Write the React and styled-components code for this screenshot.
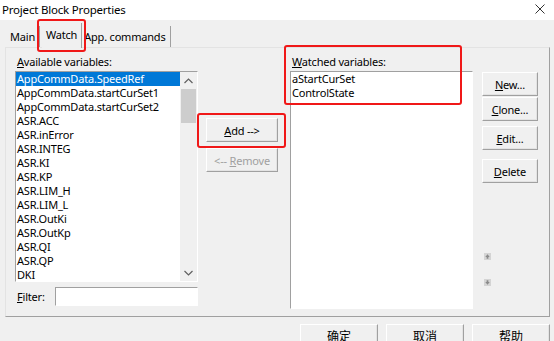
import React from "react";
import styled, { createGlobalStyle } from "styled-components";

const GlobalStyle = createGlobalStyle`
  html, body {
    margin: 0;
    padding: 0;
    background: #f0f0f0;
  }
  body {
    font-family: "Noto Sans", "Noto Sans CJK SC", sans-serif;
    font-size: 11px;
    letter-spacing: -0.2px;
    color: #000;
  }
`;

const available = [
  "AppCommData.SpeedRef",
  "AppCommData.startCurSet1",
  "AppCommData.startCurSet2",
  "ASR.ACC",
  "ASR.inError",
  "ASR.INTEG",
  "ASR.KI",
  "ASR.KP",
  "ASR.LIM_H",
  "ASR.LIM_L",
  "ASR.OutKi",
  "ASR.OutKp",
  "ASR.QI",
  "ASR.QP",
  "DKI",
];

const watched = ["aStartCurSet", "ControlState"];

export default function App() {
  return (
    <Window>
      <GlobalStyle />
      <TitleBar>
        <span>Project Block Properties</span>
        <CloseIcon viewBox="0 0 10 10">
          <path d="M0.5 0.5 L9.5 9.5 M9.5 0.5 L0.5 9.5" stroke="#333" strokeWidth="1" />
        </CloseIcon>
      </TitleBar>

      <Body>
        <Tabs>
          <Tab>Main</Tab>
          <Tab $active>Watch</Tab>
          <Tab>App. commands</Tab>
        </Tabs>

        <Panel>
          <LeftCol>
            <Label>
              <u>A</u>vailable variables:
            </Label>
            <ListBox $height={211}>
              <Items>
                {available.map((name, i) => (
                  <Item key={name} $selected={i === 0}>
                    {name}
                  </Item>
                ))}
              </Items>
              <ScrollBar>
                <ScrollArrow viewBox="0 0 9 6">
                  <path d="M0.5 5 L4.5 1 L8.5 5" fill="none" stroke="#606060" strokeWidth="1.2" />
                </ScrollArrow>
                <Track>
                  <Thumb />
                </Track>
                <ScrollArrow viewBox="0 0 9 6">
                  <path d="M0.5 1 L4.5 5 L8.5 1" fill="none" stroke="#606060" strokeWidth="1.2" />
                </ScrollArrow>
              </ScrollBar>
            </ListBox>
            <FilterRow>
              <span>
                <u>F</u>ilter:
              </span>
              <FilterInput />
            </FilterRow>
          </LeftCol>

          <MiddleCol>
            <Button $w={72}>
              <u>A</u>dd --&gt;
            </Button>
            <Button $w={72} disabled>
              &lt;-- <u>R</u>emove
            </Button>
          </MiddleCol>

          <RightCol>
            <Label>
              <u>W</u>atched variables:
            </Label>
            <ListBox $height={238}>
              <Items>
                {watched.map((name) => (
                  <Item key={name}>{name}</Item>
                ))}
              </Items>
            </ListBox>
          </RightCol>

          <ActionCol>
            <Button $w={56}>
              <u>N</u>ew...
            </Button>
            <Button $w={56}>
              <u>C</u>lone...
            </Button>
            <Button $w={56} $mt={4}>
              <u>E</u>dit...
            </Button>
            <Button $w={56} $mt={8}>
              <u>D</u>elete
            </Button>
            <Spacer />
            <MoveIcon viewBox="0 0 8 8">
              <rect width="8" height="8" fill="#d4d4d4" />
              <path d="M4 1.5 L6.5 4.5 L5 4.5 L5 6.5 L3 6.5 L3 4.5 L1.5 4.5 Z" fill="#8a8a8a" />
            </MoveIcon>
            <MoveIcon viewBox="0 0 8 8">
              <rect width="8" height="8" fill="#d4d4d4" />
              <path d="M4 6.5 L6.5 3.5 L5 3.5 L5 1.5 L3 1.5 L3 3.5 L1.5 3.5 Z" fill="#8a8a8a" />
            </MoveIcon>
          </ActionCol>

          <Mark $x={31} $y={-29} $w={49} $h={33} />
          <Mark $x={191} $y={65} $w={89} $h={35} />
          <Mark $x={278} $y={-3} $w={178} $h={60} />
        </Panel>

        <Footer>
          <FooterButton>确定</FooterButton>
          <FooterButton>取消</FooterButton>
          <FooterButton>帮助</FooterButton>
        </Footer>
      </Body>
    </Window>
  );
}

const Window = styled.div`
  width: 554px;
  height: 341px;
  overflow: hidden;
  background: #f0f0f0;
`;

const TitleBar = styled.div`
  height: 20px;
  background: #fff;
  display: flex;
  align-items: center;
  justify-content: space-between;
  padding: 0 9px 2px 2px;
  box-sizing: border-box;
  font-size: 11.5px;
`;

const CloseIcon = styled.svg`
  width: 10px;
  height: 10px;
`;

const Body = styled.div`
  padding: 3px 4px 0 5px;
`;

const Tabs = styled.div`
  display: flex;
  align-items: flex-end;
  height: 24px;
  padding-left: 3px;
`;

const Tab = styled.div`
  height: 21px;
  box-sizing: border-box;
  display: flex;
  align-items: center;
  padding: 0 4px 0 2px;
  border-right: 1px solid #a0a0a0;
  background: #f0f0f0;
  position: relative;
  z-index: 1;
  ${(p) =>
    p.$active &&
    `
    height: 25px;
    margin: 0 0 -1px 2px;
    padding: 0 4px 2px 4px;
    z-index: 2;
  `}
`;

const Panel = styled.div`
  position: relative;
  width: 545px;
  height: 270px;
  box-sizing: border-box;
  border: 1px solid;
  border-color: #e3e3e3 #a0a0a0 #a0a0a0 #e3e3e3;
  display: flex;
  align-items: flex-start;
  padding: 7px 0 0 9px;
`;

const LeftCol = styled.div`
  width: 183px;
  display: flex;
  flex-direction: column;
`;

const Label = styled.div`
  height: 16px;
  line-height: 14px;
  padding-left: 2px;
`;

const ListBox = styled.div`
  height: ${(p) => p.$height}px;
  box-sizing: border-box;
  background: #fff;
  border: 1px solid;
  border-color: #a0a0a0 #fff #fff #a0a0a0;
  display: flex;
`;

const Items = styled.div`
  flex: 1;
  overflow: hidden;
`;

const Item = styled.div`
  height: 14px;
  line-height: 14px;
  padding-left: 1px;
  white-space: nowrap;
  background: ${(p) => (p.$selected ? "#0078d7" : "transparent")};
  color: ${(p) => (p.$selected ? "#fff" : "#000")};
`;

const ScrollBar = styled.div`
  width: 17px;
  display: flex;
  flex-direction: column;
  background: #f0f0f0;
`;

const ScrollArrow = styled.svg`
  width: 9px;
  height: 6px;
  margin: 6px auto 5px;
`;

const Track = styled.div`
  flex: 1;
  padding: 0 1px;
`;

const Thumb = styled.div`
  height: 34px;
  background: #cdcdcd;
`;

const FilterRow = styled.div`
  display: flex;
  align-items: center;
  margin-top: 5px;
  padding-left: 2px;
  gap: 10px;
`;

const FilterInput = styled.div`
  flex: 1;
  height: 19px;
  box-sizing: border-box;
  background: #fff;
  border: 1px solid;
  border-color: #a0a0a0 #fff #fff #a0a0a0;
`;

const MiddleCol = styled.div`
  width: 92px;
  display: flex;
  flex-direction: column;
  align-items: flex-start;
  padding: 63px 0 0 8px;
  box-sizing: border-box;
  gap: 6px;
`;

const Button = styled.button`
  width: ${(p) => p.$w}px;
  height: 24px;
  margin-top: ${(p) => p.$mt || 0}px;
  padding: 0;
  font: inherit;
  letter-spacing: inherit;
  color: ${(p) => (p.disabled ? "#a0a0a0" : "#000")};
  background: #f0f0f0;
  border: 1px solid;
  border-color: #fff #a0a0a0 #a0a0a0 #fff;
  box-shadow: inset -1px -1px 0 #e3e3e3;
  display: flex;
  align-items: center;
  justify-content: center;
  white-space: pre;
`;

const RightCol = styled.div`
  width: 183px;
  display: flex;
  flex-direction: column;
`;

const ActionCol = styled.div`
  height: 244px;
  display: flex;
  flex-direction: column;
  align-items: flex-start;
  padding: 17px 0 0 9px;
  box-sizing: border-box;
  gap: 1px;
`;

const Spacer = styled.div`
  flex: 1;
`;

const MoveIcon = styled.svg`
  width: 7px;
  height: 7px;
  margin: 0 0 18px 2px;

  &:last-of-type {
    margin-bottom: 13px;
  }
`;

const Mark = styled.div`
  position: absolute;
  left: ${(p) => p.$x}px;
  top: ${(p) => p.$y}px;
  width: ${(p) => p.$w}px;
  height: ${(p) => p.$h}px;
  border: 2px solid #f01818;
  border-radius: 3px;
  box-sizing: border-box;
  pointer-events: none;
  z-index: 5;
`;

const Footer = styled.div`
  display: flex;
  justify-content: flex-end;
  gap: 8px;
  padding: 7px 0 0 0;
`;

const FooterButton = styled.button`
  width: 78px;
  height: 24px;
  padding: 0;
  font: inherit;
  font-size: 12px;
  background: #f0f0f0;
  border: 1px solid;
  border-color: #fff #a0a0a0 #a0a0a0 #fff;
  box-shadow: inset -1px -1px 0 #e3e3e3;
`;
